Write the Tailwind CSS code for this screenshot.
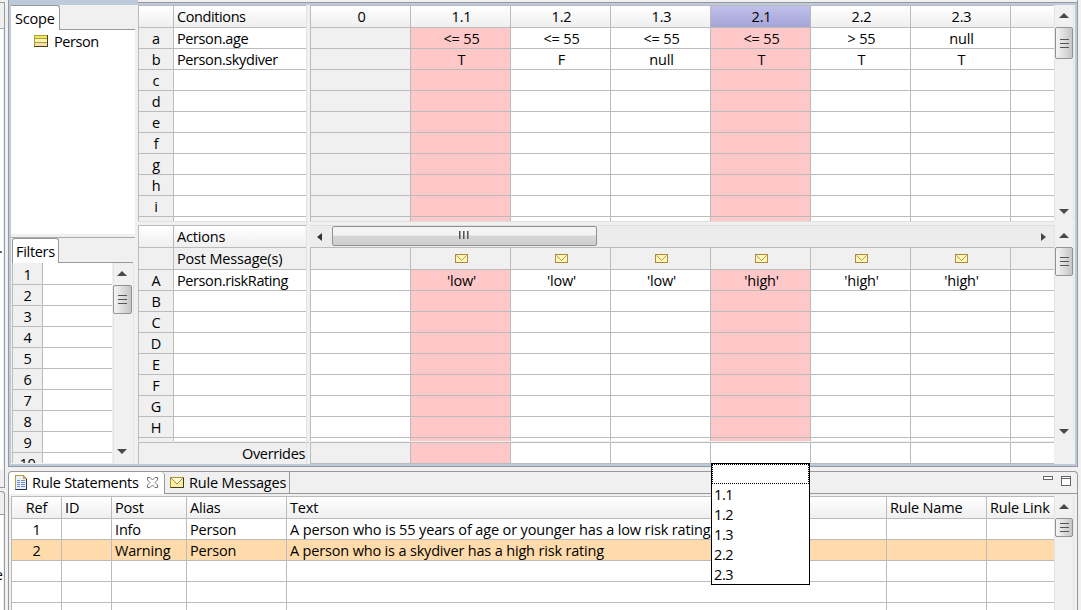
<!DOCTYPE html>
<html lang="en">
<head>
<meta charset="utf-8">
<title>Rulesheet</title>
<script src="https://cdn.jsdelivr.net/npm/@tailwindcss/browser@4"></script>
</head>
<body class="bg-[#f0f0f0]">
<svg class="hidden">
  <symbol id="mail" viewBox="0 0 13 9"><rect x=".5" y=".5" width="12" height="8" fill="#fff6b8" stroke="#b08a3c"/><path d="M1.5 1.5 6.5 6.5 11.5 1.5" fill="none" stroke="#b59a5a"/></symbol>
  <symbol id="up" viewBox="0 0 10 5"><path d="M5 0 10 5H0z" fill="#484848"/></symbol>
  <symbol id="down" viewBox="0 0 10 5"><path d="M0 0H10L5 5z" fill="#484848"/></symbol>
</svg>
<div class="relative flex w-[1081px] h-[610px] overflow-hidden bg-[#f0f0f0] text-black text-[14.5px] leading-[20px] tracking-[-0.17px] whitespace-nowrap" style="font-family:'Open Sans','Noto Sans',sans-serif">

  <!-- edge of the neighbouring views -->
  <div class="flex flex-col w-[8px] h-full shrink-0 text-[14px]">
    <div class="mt-[2px] w-[5px] h-[489px] border-t border-r border-[#999] flex flex-col overflow-hidden">
      <div class="h-[26px] border-b border-[#aaa]"></div>
      <div class="h-[440px] bg-white pt-[209px] w-[3px]"><span class="block -ml-px">.</span></div>
      <div class="flex-1 border-b border-[#999]"></div>
    </div>
    <div class="mt-[3px] w-[5px] h-[120px] border-t border-r border-[#999] rounded-tr-[4px] overflow-hidden">
      <div class="h-[23px] border-b border-[#999]"></div>
      <div class="h-[96px] w-[3px] bg-white pt-[50px]"><span class="block -ml-[5px]">e</span></div>
    </div>
  </div>

  <div class="flex flex-col w-[1070px] shrink-0">
    <!-- rulesheet editor -->
    <div class="flex h-[467px] border-x border-b border-[#999] bg-[#bccadb]">
      <div class="ml-[2px] mt-[5px] mb-[2px] w-[127px] flex flex-col bg-[#f0f0f0]">
        <div class="flex h-[25px]">
          <div class="w-[49px] bg-white border-t border-r border-[#999] rounded-tr-[3px] pl-[4px] pt-[3px]">Scope</div>
          <div class="flex-1 mr-[3px] border-b border-[#999]"></div>
        </div>
        <div class="h-[204px] w-[124px] bg-white pl-[23px] pt-[2px] flex items-start">
          <svg class="w-[14px] h-[12px] mt-[3px] mr-[6px]" viewBox="0 0 14 12" shape-rendering="crispEdges"><rect width="14" height="12" fill="#4a3f10"/><rect width="13" height="11" fill="#a8a43c"/><rect x="1" y="1" width="12" height="2" fill="#f0e65a"/><rect x="1" y="4" width="12" height="3" fill="#fdf3b0"/><rect x="1" y="8" width="12" height="3" fill="#fbdcae"/></svg>
          <span class="tracking-[-0.45px]">Person</span>
        </div>
        <div class="h-[3px]"></div>
        <div class="flex h-[26px] w-[124px] border-t border-[#aaa]">
          <div class="w-[47px] ml-px bg-white border-x border-t border-[#999] rounded-t-[3px] pl-[3px] pt-[3px] tracking-[-0.3px]">Filters</div>
          <div class="flex-1 mr-[2px] border-b border-[#999]"></div>
        </div>
        <div class="flex h-[200px] overflow-hidden">
          <div id="filters" class="ml-px w-[100px] h-[200px] overflow-hidden border-l border-[#bbb] bg-white"></div>
          <div class="ml-px w-[21px] h-[200px] border-x border-[#e4e4e4] flex flex-col items-center pr-[3px]" >
            <svg class="w-[10px] h-[5px] mt-[8px]"><use href="#up"/></svg>
            <div class="mt-[9px] w-[19px] h-[29px] border border-[#939393] rounded-[2px] bg-linear-to-r from-[#f5f5f5] to-[#c5c5c8] flex flex-col items-center justify-center gap-[3px]"><i class="block w-[9px] h-px bg-[#555]"></i><i class="block w-[9px] h-px bg-[#555]"></i><i class="block w-[9px] h-px bg-[#555]"></i></div>
            <svg class="w-[10px] h-[5px] mt-auto mb-[9px]"><use href="#down"/></svg>
          </div>
        </div>
      </div>

      <div class="w-[939px] flex flex-col">
        <div class="h-[3px] border-b border-[#999] bg-[#f0f0f0]"></div>
        <div class="mt-[2px] mr-[2px] h-[459px] flex bg-[#f0f0f0]">
          <div class="w-[168px]">
            <div id="condNames" class="h-[216px] overflow-hidden border-t border-l border-[#bbb] bg-white"></div>
            <div class="h-[4px] border-t border-[#e2e2e2]"></div>
            <div id="actNames" class="h-[216px] overflow-hidden border-t border-l border-[#bbb] bg-white"></div>
            <div class="mt-px h-[22px] w-[171px] border-t border-l border-[#bbb] pr-[4px] pt-px text-right tracking-[-0.35px]">Overrides</div>
          </div>
          <div class="w-[4px] border-l border-[#e2e2e2]"></div>
          <div class="w-[744px]">
            <div id="condGrid" class="h-[216px] overflow-hidden border-t border-l border-[#bbb] bg-white"></div>
            <div class="h-[4px] border-t border-[#ddd]"></div>
            <div class="h-[216px] overflow-hidden">
              <div class="flex items-start h-[22px] bg-[#ececec] border-t border-[#ddd]">
                <svg class="w-[5px] h-[8px] ml-[7px] mt-[7px]" viewBox="0 0 5 8"><path d="M5 0V8L0 4z" fill="#333"/></svg>
                <div class="ml-[10px] w-[265px] h-[20px] border border-[#939393] rounded-[2px] bg-linear-to-b from-[#f3f3f3] from-45% via-[#d6d6d8] via-50% to-[#cfcfd2] flex items-center justify-center gap-[2px] pb-[2px] pr-[2px]"><i class="block w-[2px] h-[8px] border-r border-[#999] bg-[#555]"></i><i class="block w-[2px] h-[8px] border-r border-[#999] bg-[#555]"></i><i class="block w-[2px] h-[8px] border-r border-[#999] bg-[#555]"></i></div>
                <svg class="w-[5px] h-[8px] ml-auto mr-[8px] mt-[7px]" viewBox="0 0 5 8"><path d="M0 0V8L5 4z" fill="#444"/></svg>
              </div>
              <div id="actGrid" class="h-[194px] overflow-hidden border-t border-l border-[#bbb] bg-white"></div>
            </div>
            <div id="overrides" class="mt-px h-[22px] border-t border-l border-[#bbb] bg-white"></div>
          </div>
          <div class="w-[21px] flex flex-col">
            <div class="h-[216px] w-[20px] border-x border-[#e4e4e4] flex flex-col items-center">
              <svg class="w-[10px] h-[5px] mt-[8px]"><use href="#up"/></svg>
              <div class="mt-[9px] w-[18px] h-[32px] border border-[#939393] rounded-[2px] bg-linear-to-r from-[#f5f5f5] to-[#c5c5c8] flex flex-col items-center justify-center gap-[3px]"><i class="block w-[9px] h-px bg-[#555]"></i><i class="block w-[9px] h-px bg-[#555]"></i><i class="block w-[9px] h-px bg-[#555]"></i></div>
              <svg class="w-[10px] h-[5px] mt-auto mb-[7px]"><use href="#down"/></svg>
            </div>
            <div class="h-[4px]"></div>
            <div class="h-[216px] w-[20px] border-x border-[#e4e4e4] flex flex-col items-center">
              <svg class="w-[10px] h-[5px] mt-[8px]"><use href="#up"/></svg>
              <div class="mt-[9px] w-[18px] h-[29px] border border-[#939393] rounded-[2px] bg-linear-to-r from-[#f5f5f5] to-[#c5c5c8] flex flex-col items-center justify-center gap-[3px]"><i class="block w-[9px] h-px bg-[#555]"></i><i class="block w-[9px] h-px bg-[#555]"></i><i class="block w-[9px] h-px bg-[#555]"></i></div>
              <svg class="w-[10px] h-[5px] mt-auto mb-[7px]"><use href="#down"/></svg>
            </div>
          </div>
        </div>
      </div>
    </div>

    <!-- rule statements view -->
    <div class="mt-[4px] flex-1 h-[139px] border-t border-x border-[#999] rounded-t-[4px] flex flex-col">
      <div class="flex h-[22px]">
        <div class="w-[156px] bg-white border-r border-[#999] rounded-t-[4px] flex items-start pl-[6px]">
          <svg class="w-[12px] h-[15px] mt-[3px] mr-[5px]" viewBox="0 0 12 15"><path d="M.5.5h8l3 3v11H.5z" fill="#e9f2fc" stroke="#6b7686"/><path d="M.5 14V.5h8l3 3" fill="none" stroke="#c09a40"/><path d="M8.500 .5v3h3z" fill="#e8bd60" stroke="#b88a30" stroke-width=".7"/><path d="M2 5.500h3m1 0h4M2 7.500h3m1 0h4M2 9.500h3m1 0h4M2 11.500h3m1 0h4" stroke="#6f8fc4"/><path d="M.5 14.500h11V4" fill="none" stroke="#26344f"/></svg>
          <span class="pt-[1px] tracking-[-0.25px]">Rule Statements</span>
          <svg class="w-[11px] h-[11px] mt-[5px] ml-[8px]" viewBox="0 0 11 11"><path d="M.5.5h2.500L5.500 3 8 .5h2.500V3L8 5.500 10.500 8v2.500H8L5.500 8 3 10.500H.5V8L3 5.500.5 3z" fill="#fff" stroke="#666" stroke-width=".9"/></svg>
        </div>
        <div class="w-[125px] border-r border-b border-[#999] flex items-start pl-[5px] pt-px">
          <svg class="w-[14px] h-[11px] mt-[4px] mr-[5px]" viewBox="0 0 14 11"><rect x=".5" y=".5" width="13" height="10" fill="#fff0a0" stroke="#b89030"/><path d="M1 1 7 7 13 1" fill="#fffbe0" stroke="#a88a48"/><path d="M.5 10.500h13V1" fill="none" stroke="#3a3a30"/></svg>
          <span>Rule Messages</span>
        </div>
        <div class="flex-1 border-b border-[#999] flex items-start justify-end pr-[6px]">
          <div class="w-[10px] h-[4px] mt-[4px] border border-[#666] bg-white"></div>
          <div class="w-[10px] h-[10px] mt-[4px] ml-[8px] border border-[#666] bg-white"><div class="h-[2px] border-b border-[#666]"></div></div>
        </div>
      </div>
      <div class="flex pt-[2px] pl-[2px]">
        <div id="stmts" class="w-[1043px] h-[114px] overflow-hidden border-t border-l border-[#bbb] bg-white"></div>
        <div class="w-[20px] h-[114px] border-x border-[#e4e4e4] flex flex-col items-center">
          <svg class="w-[10px] h-[5px] mt-[8px]"><use href="#up"/></svg>
          <div class="mt-[9px] w-[18px] h-[19px] border border-[#939393] rounded-[2px] bg-linear-to-r from-[#f5f5f5] to-[#c5c5c8] flex flex-col items-center justify-center gap-[3px] shrink-0"><i class="block w-[9px] h-px bg-[#555]"></i><i class="block w-[9px] h-px bg-[#555]"></i><i class="block w-[9px] h-px bg-[#555]"></i></div>
        </div>
      </div>
    </div>
  </div>

  <!-- override choices -->
  <div class="absolute left-[711px] top-[463px] w-[99px] h-[122px] border border-black bg-white">
    <div class="h-[20px] border border-dotted border-black"></div>
    <div class="pl-[2px] pt-px tracking-[-0.4px]"><div>1.1</div><div>1.2</div><div>1.3</div><div>2.2</div><div>2.3</div></div>
  </div>
</div>

<script>
const put = (id, html) => document.getElementById(id).innerHTML = html;
const head = 'h-[22px] leading-[22px] bg-linear-to-b from-white to-[#efefef]';
const row = (cells, cls = 'h-[21px] leading-[22px]') => `<div class="flex border-b border-[#bbb] ${cls}">${cells}</div>`;
const mail = '<svg class="w-[13px] h-[9px] mx-auto mt-[6px]"><use href="#mail"/></svg>';

put('filters', Array.from({length: 10}, (_, i) =>
  row(`<div class="w-[30px] shrink-0 bg-[#f0f0f0] border-r border-[#bbb] text-center">${i + 1}</div>`, i ? 'h-[21px] leading-[22px]' : 'h-[22px] leading-[24px]')).join(''));

const nameRow = (k, t, cls, bg = 'bg-[#f0f0f0]') => row(`<div class="w-[35px] shrink-0 border-r border-[#bbb] text-center ${bg}">${k}</div><div class="pl-[3px] tracking-[-0.4px]">${t}</div>`, cls);
const condNames = {a: 'Person.age', b: 'Person.skydiver'};
put('condNames', nameRow('', 'Conditions', head, '') + [...'abcdefghi'].map(k => nameRow(k, condNames[k] || '')).join('') + nameRow('', ''));
put('actNames', nameRow('', '<span class="tracking-[-0.17px]">Actions</span>', head, '') + nameRow('', '<span class="tracking-[-0.17px]">Post Message(s)</span>', 'h-[22px] leading-[22px] bg-[#f0f0f0]') +
  [...'ABCDEFGH'].map(k => nameRow(k, k === 'A' ? 'Person.riskRating' : '')).join('') + nameRow('', ''));

const cols = (vals, style) => Array.from({length: 8}, (_, i) =>
  `<div class="${i < 7 ? 'w-[100px] border-r border-[#bbb]' : 'flex-1'} shrink-0 pl-[2px] text-center ${style(i)}">${vals[i] || ''}</div>`).join('');
const pink = i => i === 1 || i === 4 ? 'bg-[#ffc8c8]' : i === 0 ? 'bg-[#f0f0f0]' : '';
const pinkOnly = i => i === 1 || i === 4 ? 'bg-[#ffc8c8]' : '';
put('condGrid', row(cols(['0', '1.1', '1.2', '1.3', '2.1', '2.2', '2.3'], i => i === 4 ? 'bg-linear-to-b from-[#c0c0ea] to-[#a4a4d8]' : ''), head) +
  row(cols(['', '&lt;= 55', '&lt;= 55', '&lt;= 55', '&lt;= 55', '&gt; 55', 'null'], pink)) +
  row(cols(['', 'T', 'F', 'null', 'T', 'T', 'T'], pink)) + row(cols([], pink)).repeat(8));
put('actGrid', row(cols(['', mail, mail, mail, mail, mail, mail], () => ''), 'h-[22px] bg-[#f0f0f0]') +
  row(cols(['', "'low'", "'low'", "'low'", "'high'", "'high'", "'high'"], pinkOnly)) + row(cols([], pinkOnly)).repeat(8));
put('overrides', row(cols([], i => i === 0 ? 'bg-[#f0f0f0]' : i === 1 ? 'bg-[#ffc8c8]' : '')));

const widths = ['w-[50px] text-center', 'w-[50px] pl-[3px]', 'w-[75px] pl-[3px]', 'w-[100px] pl-[3px]', 'w-[600px] pl-[3px]', 'w-[100px] pl-[3px]', 'flex-1 pl-[3px] border-r-0'];
const stmt = (v, cls) => row(widths.map((w, i) => `<div class="shrink-0 border-r border-[#bbb] ${w}">${v[i] || ''}</div>`).join(''), cls);
put('stmts', stmt(['Ref', 'ID', 'Post', 'Alias', 'Text', 'Rule Name', 'Rule Link'], head) +
  stmt(['1', '', 'Info', 'Person', '<span class="tracking-[-0.13px]">A person who is 55 years of age or younger has a low risk rating</span>']) +
  stmt(['2', '', 'Warning', 'Person', 'A person who is a skydiver has a high risk rating'], 'h-[21px] leading-[22px] bg-[#ffdbab]') +
  stmt([]) + stmt([]) + stmt([]));
</script>
</body>
</html>
